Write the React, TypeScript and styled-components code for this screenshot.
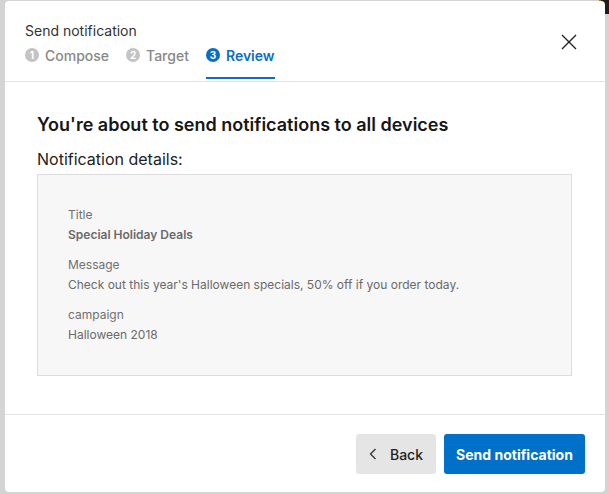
import React from "react";
import styled, { createGlobalStyle } from "styled-components";

const Global = createGlobalStyle`
  html, body { margin: 0; padding: 0; }
  body { font-family: Inter, "Noto Sans", sans-serif; background: #d4d4d4; }
  * { box-sizing: border-box; }
`;

const Page = styled.div`
  position: relative;
  width: 609px;
  height: 494px;
  overflow: hidden;
  background: #d4d4d4;
`;

const BehindText = styled.span`
  position: absolute;
  left: -4px;
  top: 283px;
  font-family: "Liberation Sans", sans-serif;
  font-size: 14px;
  color: #222;
`;

const Corner = styled.div`
  position: absolute;
  right: 0;
  top: 0;
  width: 10px;
  height: 14px;
  background: #1d1d1d;
  border-left: 2px solid #b8741a;
  border-bottom-left-radius: 6px;
`;

const Dialog = styled.div`
  position: absolute;
  left: 5px;
  top: 1px;
  width: 600px;
  height: 491px;
  background: #fff;
  border-radius: 4px;
  display: flex;
  flex-direction: column;
`;

const Header = styled.header`
  height: 81px;
  border-bottom: 1px solid #e3e3e3;
  padding: 20px 20px 0 20px;
  display: flex;
  justify-content: space-between;
`;

const HeadLeft = styled.div`
  display: flex;
  flex-direction: column;
`;

const DialogTitle = styled.div`
  font-size: 14px;
  line-height: 20px;
  color: #333;
`;

const Steps = styled.div`
  display: flex;
  gap: 17px;
  margin-top: 3px;
`;

const Step = styled.div<{ $active?: boolean }>`
  display: flex;
  align-items: center;
  gap: 6px;
  height: 35px;
  padding-bottom: 11px;
  font-size: 14px;
  font-weight: ${(p) => (p.$active ? 600 : 500)};
  color: ${(p) => (p.$active ? "#0a6ec7" : "#888")};
  border-bottom: 2px solid ${(p) => (p.$active ? "#0a6ec7" : "transparent")};
`;

const StepNum = styled.span<{ $active?: boolean }>`
  width: 14px;
  height: 14px;
  border-radius: 50%;
  background: ${(p) => (p.$active ? "#0a6ec7" : "#c4c4c4")};
  color: #fff;
  font-size: 10px;
  font-weight: 700;
  display: flex;
  align-items: center;
  justify-content: center;
`;

const CloseBtn = styled.button`
  width: 20px;
  height: 20px;
  margin-top: 11px;
  margin-right: 6px;
  padding: 0;
  border: none;
  background: none;
  display: flex;
  align-items: center;
  justify-content: center;
`;

const Body = styled.main`
  flex: 1;
  padding: 31px 33px 0 32px;
  border-bottom: 1px solid #e3e3e3;
`;

const Heading = styled.h2`
  margin: 0;
  font-size: 18px;
  line-height: 24px;
  font-weight: 600;
  color: #161616;
`;

const SubHeading = styled.div`
  margin-top: 12px;
  font-size: 16px;
  line-height: 20px;
  color: #222;
`;

const DetailsBox = styled.div`
  margin-top: 5px;
  height: 202px;
  background: #f7f7f7;
  border: 1px solid #dcdcdc;
  padding: 30px 30px 30px 30px;
  font-family: Inter, "Liberation Sans", sans-serif;
  font-size: 12px;
  line-height: 20px;
  color: #6a6a6a;
`;

const Field = styled.div`
  margin-bottom: 10px;
`;

const Label = styled.div`
  color: #707070;
`;

const Value = styled.div<{ $bold?: boolean }>`
  color: #6a6a6a;
  font-weight: ${(p) => (p.$bold ? 600 : 400)};
`;

const Footer = styled.footer`
  height: 77px;
  padding: 19px 20px 0 0;
  display: flex;
  justify-content: flex-end;
  gap: 8px;
`;

const Button = styled.button<{ $primary?: boolean }>`
  height: 40px;
  border: none;
  border-radius: 3px;
  font-family: Inter, sans-serif;
  font-size: 14px;
  display: flex;
  align-items: center;
  justify-content: center;
  gap: 13px;
  background: ${(p) => (p.$primary ? "#0070c9" : "#e5e5e5")};
  color: ${(p) => (p.$primary ? "#fff" : "#222")};
  font-weight: ${(p) => (p.$primary ? 700 : 500)};
  width: ${(p) => (p.$primary ? "141px" : "80px")};
  padding: 0;
`;

export default function App() {
  return (
    <Page>
      <Global />
      <BehindText>t</BehindText>
      <Corner />
      <Dialog>
        <Header>
          <HeadLeft>
            <DialogTitle>Send notification</DialogTitle>
            <Steps>
              <Step>
                <StepNum>1</StepNum>Compose
              </Step>
              <Step>
                <StepNum>2</StepNum>Target
              </Step>
              <Step $active>
                <StepNum $active>3</StepNum>Review
              </Step>
            </Steps>
          </HeadLeft>
          <CloseBtn aria-label="Close">
            <svg width="16" height="16" viewBox="0 0 16 16">
              <path d="M1 1L15 15M15 1L1 15" stroke="#222" strokeWidth="1.4" fill="none" />
            </svg>
          </CloseBtn>
        </Header>
        <Body>
          <Heading>You're about to send notifications to all devices</Heading>
          <SubHeading>Notification details:</SubHeading>
          <DetailsBox>
            <Field>
              <Label>Title</Label>
              <Value $bold>Special Holiday Deals</Value>
            </Field>
            <Field>
              <Label>Message</Label>
              <Value>Check out this year's Halloween specials, 50% off if you order today.</Value>
            </Field>
            <Field>
              <Label>campaign</Label>
              <Value>Halloween 2018</Value>
            </Field>
          </DetailsBox>
        </Body>
        <Footer>
          <Button>
            <svg width="8" height="12" viewBox="0 0 8 12">
              <path d="M6.5 1L1.5 6L6.5 11" stroke="#333" strokeWidth="1.3" fill="none" />
            </svg>
            Back
          </Button>
          <Button $primary>Send notification</Button>
        </Footer>
      </Dialog>
    </Page>
  );
}
